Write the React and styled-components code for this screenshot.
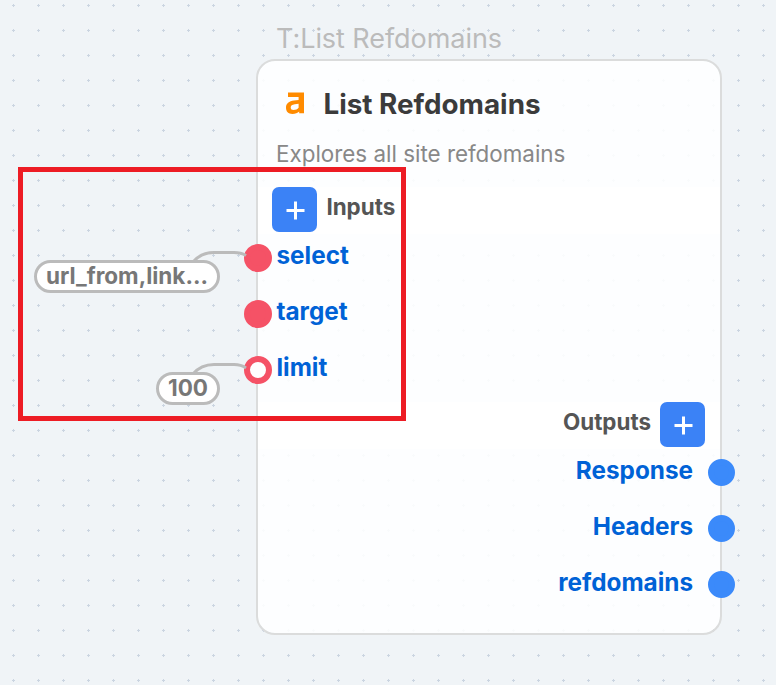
import React from 'react';
import styled, { createGlobalStyle } from 'styled-components';

const GlobalStyle = createGlobalStyle`
  * { box-sizing: border-box; }
  body {
    margin: 0;
    overflow: hidden;
    font-family: Inter, "Liberation Sans", sans-serif;
  }
`;

const Canvas = styled.main`
  position: relative;
  width: 776px;
  height: 685px;
  overflow: hidden;
  background-color: #f0f4f7;
  background-size: 25px 25px;
  background-image:
    conic-gradient(from 90deg at 22px 24px, #cbd5e1 25%, transparent 0),
    conic-gradient(from 90deg at 24px 22px, #cbd5e1 25%, transparent 0);
  background-position: 15px 6px, 14px 7px;
`;

const NodeType = styled.div`
  position: absolute;
  left: 276px;
  top: 22px;
  font-size: 27px;
  line-height: 33px;
  letter-spacing: -0.06px;
  color: #bbb;
  white-space: nowrap;
`;

const NodeCard = styled.section`
  position: absolute;
  left: 256px;
  top: 59px;
  width: 466px;
  height: 576px;
  display: flex;
  flex-direction: column;
  border: 2px solid #dbdcdc;
  border-radius: 19px;
  background: rgba(254, 255, 255, 0.9);
  background-clip: padding-box;
`;

const Header = styled.header`
  height: 126px;
  padding: 22px 0 0 18px;
`;

const TitleRow = styled.div`
  display: flex;
  align-items: center;
  height: 42px;
  padding-left: 9px;
`;

const Title = styled.h1`
  margin: 0 0 0 18.5px;
  font-size: 27.8px;
  font-weight: 700;
  line-height: 42px;
  color: #3b3b3b;
`;

const Description = styled.p`
  margin: 15px 0 0;
  font-size: 22.4px;
  line-height: 27px;
  color: #888;
`;

const PortHeader = styled.div`
  display: flex;
  height: 47px;
  padding: 0 15px 0 14.4px;
  gap: 9px;
  justify-content: ${(p) => (p.$end ? 'flex-end' : 'flex-start')};
  background: #fff;
`;

const PortHeading = styled.h2`
  margin: 0;
  font-size: 22.4px;
  font-weight: 700;
  line-height: 40px;
  color: #555;
`;

const AddButton = styled.button`
  display: grid;
  place-items: center;
  width: 45px;
  height: 45px;
  padding: 1px 0 0 1px;
  border: 0;
  border-radius: 7px;
  background: #3b82f6;
`;

const PortList = styled.div`
  display: flex;
  flex-direction: column;
  height: ${(p) => p.$height};
`;

const Port = styled.div`
  display: flex;
  align-items: center;
  gap: ${(p) => (p.$output ? '15px' : '4.5px')};
  height: 56px;
  flex: none;
  margin: ${(p) => (p.$output ? '-5px -15px 5px 0' : '-4px 0 4px -14px')};
  justify-content: ${(p) => (p.$output ? 'flex-end' : 'flex-start')};
`;

const PortLabel = styled.span`
  font-size: 24.3px;
  font-weight: 700;
  line-height: 30px;
  padding-bottom: ${(p) => (p.$output ? '5px' : '7px')};
  color: #0062d6;
`;

const Handle = styled.span`
  width: ${(p) => (p.$output ? '27px' : '28px')};
  height: ${(p) => (p.$output ? '27px' : '28px')};
  border-radius: 50%;
  border: 6px solid ${(p) => (p.$output ? '#3b8afa' : '#f55266')};
  background: ${(p) => (p.$open ? '#fff' : p.$output ? '#3b8afa' : '#f55266')};
  background-clip: ${(p) => (p.$open ? 'padding-box' : 'border-box')};
`;

const Wires = styled.svg`
  position: absolute;
  left: 0;
  top: 0;
  width: 776px;
  height: 685px;
`;

const ValuePill = styled.div`
  position: absolute;
  left: ${(p) => p.$x}px;
  top: ${(p) => p.$y}px;
  width: ${(p) => p.$w}px;
  height: 33px;
  border: 3px solid #bbb;
  border-radius: 17px;
  background: #fff;
  font-size: 22.5px;
  font-weight: 700;
  line-height: 26px;
  text-align: center;
  white-space: nowrap;
  color: #777;
`;

const Highlight = styled.div`
  position: absolute;
  left: 18px;
  top: 167px;
  width: 388px;
  height: 254px;
  border: 5px solid #ed1c24;
`;

const PlusIcon = () => (
  <svg width="19" height="19" viewBox="0 0 19 19">
    <path d="M9.5 0.5v18M0.5 9.5h18" stroke="#fff" strokeWidth="3" />
  </svg>
);

const BrandIcon = () => (
  <svg width="20" height="24" viewBox="0 0 20 24">
    <path
      fill="#ff8b00"
      fillRule="evenodd"
      d="M3 0.5H19V21.2H14.2V19.6C12.6 21.2 10.4 21.9 7.4 21.9C3.3 21.9 1 19.5 1 15.7C1 11.5 4 9.3 9 8.6L13.6 8V5H3ZM13.6 11.8L9.8 12.3C7 12.8 5.7 13.7 5.7 15.5C5.7 17.2 6.7 18 8.5 18C10.8 18 12.4 17.2 13.6 15.8Z"
    />
  </svg>
);

const inputs = [{ name: 'select' }, { name: 'target' }, { name: 'limit', open: true }];
const outputs = ['Response', 'Headers', 'refdomains'];

export default function App() {
  return (
    <>
      <GlobalStyle />
      <Canvas>
        <NodeType>T:List Refdomains</NodeType>
        <NodeCard>
          <Header>
            <TitleRow>
              <BrandIcon />
              <Title>List Refdomains</Title>
            </TitleRow>
            <Description>Explores all site refdomains</Description>
          </Header>
          <PortHeader>
            <AddButton aria-label="Add input"><PlusIcon /></AddButton>
            <PortHeading>Inputs</PortHeading>
          </PortHeader>
          <PortList $height="168px">
            {inputs.map((port) => (
              <Port key={port.name}>
                <Handle $open={port.open} />
                <PortLabel>{port.name}</PortLabel>
              </Port>
            ))}
          </PortList>
          <PortHeader $end>
            <PortHeading>Outputs</PortHeading>
            <AddButton aria-label="Add output"><PlusIcon /></AddButton>
          </PortHeader>
          <PortList>
            {outputs.map((name) => (
              <Port key={name} $output>
                <PortLabel $output>{name}</PortLabel>
                <Handle $output />
              </Port>
            ))}
          </PortList>
        </NodeCard>
        <Wires fill="none" stroke="#bbb" strokeWidth="3">
          <path d="M193 262C198 256 205 252.5 214 252.5H234Q241 252.5 246 255.5" />
          <path d="M193 374C198 368 205 364.5 214 364.5H234Q241 364.5 246 368" />
        </Wires>
        <ValuePill $x={34} $y={260} $w={186}>url_from,link...</ValuePill>
        <ValuePill $x={156} $y={372} $w={64}>100</ValuePill>
        <Highlight />
      </Canvas>
    </>
  );
}
